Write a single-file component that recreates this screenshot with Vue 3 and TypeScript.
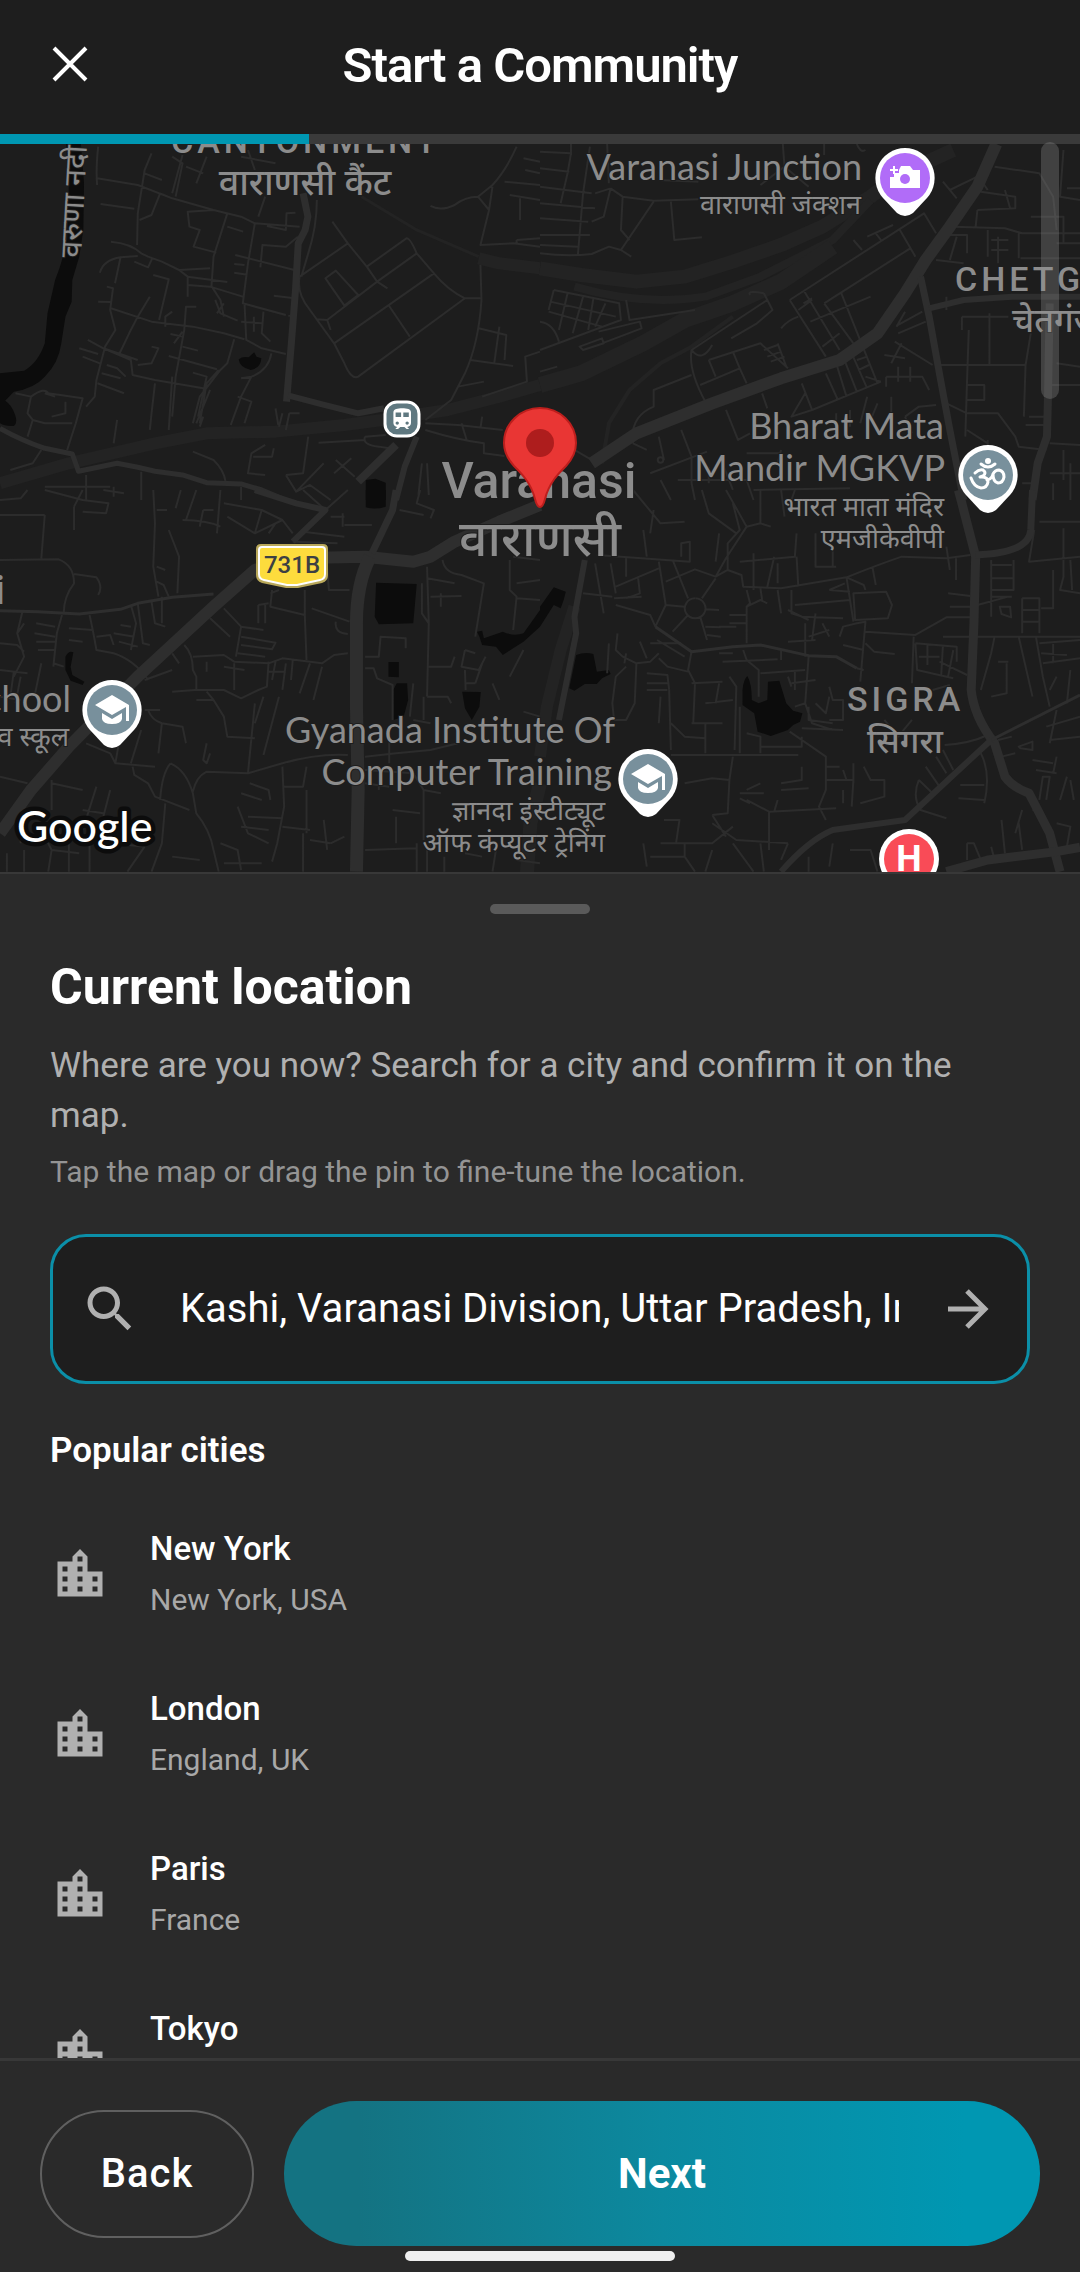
<script setup lang="ts">
import { ref } from 'vue'

interface City { name: string; region: string }
interface Road { w: number; d: string }
interface Tile { x: number; y: number; water: string; rail: Road[]; major: Road[]; minor: string }
interface Label { t: string; x: number; y: number; s: number; a: 'start' | 'middle' | 'end'; k: string }

const step = 2
const steps = 7
const query = ref('Kashi, Varanasi Division, Uttar Pradesh, India')

const cities: City[] = [
  { name: 'New York', region: 'New York, USA' },
  { name: 'London', region: 'England, UK' },
  { name: 'Paris', region: 'France' },
  { name: 'Tokyo', region: 'Japan' },
]

const labels: Label[] = [
  { t: 'CANTONMENT', x: 171, y: 153, s: 34, a: 'start', k: 'area' },
  { t: 'वाराणसी कैंट', x: 305, y: 195, s: 36, a: 'middle', k: 'hindi strong' },
  { t: 'Varanasi Junction', x: 862, y: 180, s: 36, a: 'end', k: 'poi' },
  { t: 'वाराणसी जंक्शन', x: 861, y: 214, s: 27, a: 'end', k: 'hindi' },
  { t: 'CHETGANJ', x: 955, y: 291, s: 34, a: 'start', k: 'area' },
  { t: 'चेतगंज', x: 1012, y: 332, s: 34, a: 'start', k: 'hindi strong' },
  { t: 'Varanasi', x: 539, y: 498, s: 50, a: 'middle', k: 'city' },
  { t: 'वाराणसी', x: 540, y: 556, s: 50, a: 'middle', k: 'hindi strong' },
  { t: 'Bharat Mata', x: 944, y: 439, s: 36, a: 'end', k: 'poi' },
  { t: 'Mandir MGKVP', x: 945, y: 481, s: 36, a: 'end', k: 'poi' },
  { t: 'भारत माता मंदिर', x: 944, y: 516, s: 27, a: 'end', k: 'hindi' },
  { t: 'एमजीकेवीपी', x: 944, y: 548, s: 27, a: 'end', k: 'hindi' },
  { t: 'Lahartari', x: 5, y: 604, s: 40, a: 'end', k: 'city' },
  { t: 'School', x: 71, y: 712, s: 36, a: 'end', k: 'poi' },
  { t: 'व स्कूल', x: 69, y: 746, s: 27, a: 'end', k: 'hindi' },
  { t: 'Gyanada Institute Of', x: 615, y: 743, s: 36, a: 'end', k: 'poi' },
  { t: 'Computer Training', x: 612, y: 785, s: 36, a: 'end', k: 'poi' },
  { t: 'ज्ञानदा इंस्टीट्यूट', x: 605, y: 820, s: 27, a: 'end', k: 'hindi' },
  { t: 'ऑफ कंप्यूटर ट्रेनिंग', x: 605, y: 852, s: 27, a: 'end', k: 'hindi' },
  { t: 'SIGRA', x: 847, y: 711, s: 34, a: 'start', k: 'area' },
  { t: 'सिगरा', x: 905, y: 753, s: 34, a: 'middle', k: 'hindi strong' },
]

/* Map geometry, one entry per quadrant, in tile units. */
const tiles: Tile[] = [
  {
    x: 0, y: 130,
    water: 'M192 42L200 160 195 330Q180 400 160 450L138 550 130 640Q110 700 70 722L0 730V880Q15 890 40 888Q52 880 44 855Q35 825 15 812L40 785Q100 775 130 740Q170 700 178 640L190 560 208 515 210 450 230 380 242 300 244 160 235 42ZM693 688Q705 678 722 682L738 667 745 680 759 685Q757 715 728 720 695 712 693 688ZM1062 1050L1090 1046 1120 1058V1110H1062Z',
    rail: [
      { w: 12, d: 'M0 1060L200 1000 450 940 600 910 800 905 1000 885 1110 870 1300 840 1450 800 1568 765' },
      { w: 3, d: 'M1050 200L1210 300 1390 380' },
      { w: 12, d: 'M1390 385L1450 400 1568 415' },
    ],
    major: [
      { w: 5, d: 'M0 895Q60 930 130 955L210 972 228 1024 340 1000 400 1012 450 1024 530 1035 600 1058 700 1062 760 1080 830 1110' },
      { w: 7, d: 'M880 190L894 260 886 300 866 340 858 480 846 640 832 815' },
      { w: 6, d: 'M836 796L930 822 1040 850 1115 835' },
      { w: 6, d: 'M1210 920L1175 1010 1150 1110' },
      { w: 8, d: 'M1150 945L1040 1055' },
    ],
    minor: 'M285 50Q278 120 282 165M282 145L400 165 500 205 620 240 700 260 740 280 870 290M440 70L420 120 400 250 398 345M420 130L470 150M500 80L530 100 510 200M530 75L500 190M590 130L540 110M600 80L570 160M465 190L440 255 405 270M465 190L500 205M292 222L390 236M700 80L800 100M720 60L740 120M620 240L545 245 550 290 580 300 562 350 628 368M740 280L720 400 705 520 830 555M660 250L620 380 614 470M770 200L750 260M775 288L830 300 832 250 858 248M660 290L706 305M756 412L762 345 830 350 865 320M683 375L855 420M680 402L710 405M680 428L718 434M322 335Q380 340 410 370L430 380 470 395 520 420 545 440V500M290 428Q300 390 350 382L400 378M350 382L334 460M390 395L430 412 442 385M520 420L610 415M545 440L660 456M545 465L610 470 705 500M445 435L490 448 462 570M310 470L328 475 320 540 335 600 305 650 280 750 275 800 250 830M285 515L322 516M322 535L440 575 560 590 650 610 710 628M435 500L400 560 375 610 345 675M500 545L480 560V590M570 530L540 530 535 600 510 740 500 860M625 510L640 550 690 572M650 520L630 550M615 470L640 510 650 560M710 520L715 630 760 655 830 672M765 545L760 610 785 635M700 575L760 580M737 560V605M795 497L855 505M840 555V560M255 630L300 655 400 690M230 655L285 672M240 680L290 700M300 655L380 690 385 735 450 750 590 775M680 628L660 700 640 720 580 800 560 880M490 678L630 718M440 650L460 655 440 700 400 705M495 612L530 620M505 640L530 605M530 650L575 662M310 705L340 715 365 740M295 730L350 745M283 760L360 790M450 760L440 850 435 900M560 728L600 740 575 860M610 780L570 880M635 720L600 760 580 880M788 670Q780 720 730 740L700 745M730 740L700 800 670 885M690 800L730 815 710 880M800 835L808 885M840 850L830 900M840 850L870 850M45 790L90 800 80 850 95 870 130 880 210 880M90 800Q130 770 140 790L240 805 220 880 195 960M130 790L160 800M190 815V850L150 860M95 870L80 920M340 870L330 940M500 740L490 900M590 860L580 890M820 850L810 890M870 440L1010 340 965 275M1010 340L1065 410 1180 325Q1190 322 1210 370L1260 430Q1300 480 1350 505H1395M1065 410L1095 455 1210 370M1095 455L1125 475M1095 455L950 570 920 568M870 440Q860 490 900 540L970 640 1260 430M970 640L1000 700Q1020 750 1040 740L1350 505M945 445L975 422 1040 495 1000 527ZM1128 525L1190 620M950 570L960 600M920 210Q920 290 895 370L875 440M1500 50Q1470 120 1430 165L1388 200Q1350 200 1320 225 1280 245 1250 228M1388 200L1420 240 1395 345 1490 340 1568 350M1430 170L1420 240M1395 405L1398 510Q1390 640 1350 730L1310 810 1235 870M1390 595L1470 615 1465 690M1450 590L1435 700M1365 690L1490 708M1330 770L1405 755M1568 665L1525 680 1530 755 1400 800M1465 155L1568 165M1480 195L1568 210M1520 85L1568 95M1525 120L1568 130M1510 205V270M1500 330L1568 325M1500 330V345M925 938L1060 930M1060 920L1120 915M1060 920Q1050 945 1100 950L1130 955M560 965L620 990Q650 1020 655 1055M770 945L730 970 720 1030 770 1035M795 955L790 980 735 980M895 920L880 1030 830 1035M830 1035L860 1085 940 1000M860 1085L900 1065 960 1110M975 990L1030 1040M1020 985L970 1030M1235 900Q1330 930 1405 940V970L1465 978M1340 880L1355 930M1235 880L1330 885 1460 900M1215 1095L1225 1000M1240 1000L1245 1095M1400 860L1395 895M30 1020L95 1000 120 960M130 1070H320M250 1035V1110M410 1025V1110M700 1070V1110M330 1070V1100',
  },
  {
    x: 540, y: 130,
    water: '',
    rail: [
      { w: 14, d: 'M0 415L120 435 280 455 420 440 560 395 700 345 820 290 960 200 1050 130 1200 60' },
      { w: 8, d: 'M100 470Q300 530 480 500L640 440 850 330 960 210' },
      { w: 16, d: 'M0 765L120 730 300 640 420 570 560 520 700 455 850 350' },
      { w: 4, d: 'M180 1000L200 880 260 780 350 700 440 650 560 560' },
    ],
    major: [
      { w: 12, d: 'M1325 42L1270 170 1190 290 1120 390 1060 490 980 610 870 690 700 745 500 820 280 910 150 1000' },
      { w: 7, d: 'M1105 440L1130 560 1165 760 1190 900 1230 1110' },
      { w: 6, d: 'M1130 535L1230 510 1370 500 1568 500' },
      { w: 8, d: 'M1480 520L1475 800 1472 920 1445 1000 1430 1110' },
    ],
    minor: 'M0 65L90 70 80 130 60 220M0 115L85 125M0 170L150 190M0 220L160 235M0 265L140 275M0 315L145 315M0 345L110 350M0 370Q80 380 150 372L200 350 235 360 330 215M235 360L265 380M125 190L110 375M90 42V75M145 50L125 190M195 42L200 160M205 175L160 190M205 175L240 200 330 212 460 208M205 175L185 260 150 275M240 200L235 300 260 330M380 215L390 330 470 322M345 150L460 155M705 42L710 110 640 165M710 110L780 170M825 42V75M920 42Q930 70 945 60M40 480L230 520 235 570 0 660M40 480L25 540M30 515L220 560M25 545L180 590M80 490L55 600M125 500L95 610M155 505L140 600M190 520L160 590M0 575Q40 580 55 635M250 510L260 570 450 540M170 605L290 575 295 595 180 640M115 650L180 625 185 640 125 660ZM0 725L50 710M650 490Q600 480 610 495M650 490L675 540 630 580 555 625M660 510L440 660Q470 700 500 645M440 660Q430 720 480 815M490 690L640 640 720 715M490 690L510 740M465 765L580 715 560 665M580 715L600 760M440 735L330 780V830Q260 860 270 940M650 660L690 645M660 680L700 665M670 695L710 680M690 640L715 710M725 510L1115 250 1150 310M725 510L830 680M765 480L870 660M825 520L1075 355M825 520L910 640M1045 300L1090 380M875 490L980 760M750 540L790 510M785 575L960 500M765 520L790 505M820 650L870 610M910 330L935 360M950 320L1025 285M975 310L990 330M700 595Q720 570 750 560M760 760L790 840 990 755M830 730L865 810M860 700L890 800M880 680L920 785M905 670L950 775M945 740L990 755M920 690L950 680M925 720L955 705M645 790L660 835M540 840L575 930 610 910M790 840L730 860 770 790M410 900L440 980V1060M345 920L360 990M350 990m-8 0a8 8 0 1 0 16 0a8 8 0 1 0-16 0M270 940L310 960M320 1030L485 965M100 960L150 990M1170 155L1210 205M1190 180L1270 140M1320 110L1450 130 1490 200 1500 300M1280 185L1380 200V235L1270 240M1350 180L1365 235M1280 150L1300 180M1270 240L1265 290M1200 290L1350 295 1400 310 1568 310M1175 315H1240V370M1210 320L1190 390M1300 300V380M1330 320V400M1310 330H1360M1310 360H1360M1150 390L1230 400M1395 385H1568M1390 310V385M1520 60L1510 200 1568 210M1530 175H1568M1425 260H1520V340M1500 340H1568M1180 500V540M1225 560V600M1225 560H1360M1245 600L1240 750 1235 920M1305 550V705M1150 705H1410L1425 610M1040 585L1110 545M1040 610L1120 575M1035 590L1060 545M1030 635L1140 705M1050 640L1020 700M1000 675L1060 685M1005 740H1110L1130 780M1040 710V755M1075 710V755M1005 740V770M1240 765H1290V810H1240M1180 820L1240 850H1330L1380 920 1390 950 1470 960M1410 700L1405 860M1500 700L1568 710M1480 765H1568M1480 940L1568 945M1520 960V1050M1480 1030H1568M1420 860H1470M1410 885H1470M860 850V900M900 840V890M950 800L930 880M1060 860L1100 830 1150 825M1060 860L1080 910M1020 800V900M980 820L960 870M1240 900L1300 940M1300 930V970M400 1050H600L620 1110M530 1000L560 1080M600 970H700M620 1080L900 1075M700 960L690 1000M350 1050L380 1110M440 1060L450 1110M490 1010V1060M1400 1060H1440M1490 1060V1110M1540 1000V1110',
  },
  {
    x: 0, y: 490,
    water: 'M1062 0H1120V50Q1090 60 1062 52ZM1092 278L1210 282 1200 400 1100 403 1088 380ZM1568 360L1520 430Q1490 440 1460 425L1405 445 1400 422 1385 425 1392 440 1400 465 1440 470 1460 495 1490 475 1520 455 1568 410ZM1128 516H1158V562L1128 560ZM1152 580H1182L1185 630 1172 680 1142 690V600ZM1342 605L1396 606 1392 650 1370 690 1350 655ZM190 500Q200 480 213 487L205 530 210 555 245 575 240 585 205 572 190 540Z',
    rail: [{ w: 14, d: 'M1568 880L1540 1000 1530 1150' }],
    major: [
      { w: 12, d: 'M0 1030L90 900 200 770 400 560 620 350 740 240 850 205 1060 200 1200 215 1250 200 1320 155 1450 95 1568 45' },
      { w: 6, d: 'M740 0L860 40 945 60 850 155' },
      { w: 7, d: 'M1150 0L1140 60 1080 190' },
      { w: 13, d: 'M1075 200Q1035 280 1035 400V650L1040 900 1035 1145' },
      { w: 3, d: 'M0 362L110 365 230 372 350 358 400 340 500 322 620 312' },
    ],
    minor: 'M0 30L60 25 80 0M130 0L240 30 315 40 308 70 240 65M215 50V120M130 75L0 75M130 75L120 205M240 0L215 50M0 210L170 208Q215 225 215 280 185 320 185 370M215 252L280 262Q300 290 285 315M300 0L360 10M445 0L450 100 445 230 460 320M455 60H485M525 0L510 55M490 120L520 200 515 310M455 230L480 240M455 275L475 285 490 320M530 90Q600 90 640 110M570 0L540 90M640 0L630 130M590 60L580 110M590 60H620M650 40L760 60 820 90 850 130M660 80L740 130M760 60L740 130 820 90M800 100L780 130M880 0L945 60 1010 0M850 155L980 160M880 125L1000 140M960 80H1000M995 70V110M1000 105H1080M1220 0L1210 40 1260 60 1250 85M1160 60L1230 75M950 235L955 300H1015M1240 230L1245 400 1240 620M1225 280V370L1245 400M1240 265L1320 280M1250 320L1340 318M1280 310V350M1285 210Q1290 250 1340 255L1405 280 1380 440M1480 210V300L1500 320 1490 420M1500 280L1568 270M1568 210L1490 200M1500 325L1568 330M790 300L785 350 885 375M885 300V375L890 510M785 310L810 300M750 345V400M770 345V400M750 345L780 340M905 355L1015 395M975 395Q970 430 1010 432M650 355L700 410 685 500M700 410L765 420M700 440L800 458 790 478 700 465M690 490L770 500M610 385L668 440M535 465Q560 490 560 540L570 560V600M560 500L650 495 680 515 780 520 820 505 935 520 970 495 1010 490M500 605L565 600 650 600 700 625 750 600 775 590 780 515M680 520V600M600 515V545M650 530L710 540M570 630H620L650 680 660 740 740 745M600 605L620 630M740 640L720 850M765 620L740 700M810 620L765 795M830 520L820 600M800 515L790 570M850 510L845 570M900 520L870 610M935 530L910 630M780 545H830M420 660L465 660M420 570L500 540M500 490L520 520M400 340L415 460 435 465M380 345L395 400 380 480M440 335L450 400 480 410M470 320L470 400M350 405L380 410M180 375L165 430 155 530M260 375Q270 420 280 480L330 490Q390 510 430 570M280 440L320 435 330 465M330 430L390 440M345 455L400 470M65 365L50 430 70 500 40 560M50 430L70 400M105 400L160 410M100 430L160 440M105 455H165M110 480H160M200 415L270 420M200 450L240 455M0 460L50 465 70 485M0 540L80 550M120 520L100 620M40 545L30 620M60 560L45 640M0 620L60 630M155 520L185 530M430 660Q440 690 470 700L530 710 540 760M410 720L380 820M470 700L460 790M250 760L320 790 335 820 450 830M335 820L345 760M385 830L390 855 430 880 450 920 550 960M495 820Q540 840 560 910L570 970Q610 1020 620 1080L635 1145M495 820Q470 850 465 930M560 905Q570 860 600 845L720 850 820 820Q920 790 1010 795M600 760L590 810 600 820 610 790M725 880L780 900 785 930M700 910L760 930M820 830L825 950 805 1060 790 1115M825 890H880L890 830M720 980L820 985M700 1010L780 1020M690 950L720 1030 780 1060M820 1010L900 1020M890 900V1030M900 1050L960 1060M880 1030V1145M940 990L950 1080M960 1060L1000 1040M640 1060L690 1080 700 1140M650 1120H760M480 940L470 1060 440 1145M280 890L240 1020M240 960L300 970M320 900L300 980M150 870V960M150 880L240 900M0 860L80 880M60 920V1060M130 1040L150 1080 230 1090M150 1080L140 1145M20 1090V1145M70 1080V1145M200 1000V1145M260 1060V1145M330 1060L420 1070M420 1070L370 1145M500 1100L580 1110M1060 500H1100L1105 440 1178 445V475M1060 535H1085L1095 565 1140 585V690M1200 580L1190 680M1240 620H1300L1310 640M1230 620L1230 690M1245 530H1310L1320 500M1350 480L1340 530 1390 540 1410 500M1350 480L1380 490M1350 540L1352 600M1350 580H1380M1520 480L1480 560M1400 520L1380 580M1430 580L1450 630M1520 665L1568 680M1060 800L1150 790 1250 780 1330 760M1130 750V820M1200 690L1250 700M1060 840L1200 850 1230 900V1050M1100 850V900M1060 880L1130 890M1230 900L1280 910M1140 960L1220 970M1150 980V1060M1060 1080L1210 1075M1210 1060V1145M1240 1080V1145M1290 1100V1145M1350 1090L1400 1100M1440 1080L1430 1145M1500 1110L1568 1120',
  },
  {
    x: 540, y: 490,
    water: 'M0 350L40 292 75 305Q70 330 60 355L40 345 0 410ZM105 495Q130 485 155 492L165 545 200 540 205 552 180 565 165 582 130 582 100 602 85 595ZM588 600Q590 570 602 558 615 580 615 630L635 640 660 630 662 575 695 572 715 640 735 662 762 670 755 695 735 705 720 720 670 738 632 725 622 670 588 645Z',
    rail: [{ w: 12, d: 'M100 350L60 480 20 650 0 800' }],
    major: [
      { w: 6, d: 'M130 210L100 380 105 430 80 560 55 690' },
      { w: 9, d: 'M1215 0L1265 200 1260 400 1252 600Q1260 680 1320 760L1350 860Q1370 890 1420 910L1480 1030 1510 1145' },
      { w: 7, d: 'M1265 195Q1420 190 1425 120L1430 0' },
      { w: 6, d: 'M700 1145Q780 1050 850 1020L1060 990 1190 865 1310 750' },
      { w: 9, d: 'M1180 1145L1300 1110 1500 1085 1568 1072' },
      { w: 3, d: 'M1310 750L1568 615' },
      { w: 3, d: 'M335 410L440 485 560 470 640 465 780 497 860 500 920 535' },
    ],
    minor: 'M450 325a30 30 0 1 0 1 0M430 325L385 210M470 325L510 265M420 350L365 345M480 358L520 360M430 375L385 425M465 380L485 450M365 275L450 238 510 260 545 240 585 255 590 290 700 295 890 262M510 260L540 205 600 110M345 215L365 345 335 410M220 290L345 235M160 220L185 370M205 220L220 310M220 345L320 375 335 410M215 325L295 320M250 325L290 310 285 265M125 310L210 320M165 195L435 215V155L410 160V200M250 205V260M300 120L310 200M330 60L320 130M270 0L350 100 420 95M470 0L490 70 570 130M540 0L600 110M560 40L580 120 545 160V240M520 130L510 215M600 110L640 100 670 110M640 0V100M740 0L720 60M700 0L710 80M580 215L740 200 745 130M745 200L750 290M620 190V300M680 200L660 290M690 220V280M800 130V230H860M850 230V180M890 262Q980 225 1050 200L1180 205 1250 195M1180 170L1190 240M1208 205V270M965 230L975 285M890 262L910 395M890 262L940 285 945 300M840 300L885 280M840 300L900 305M910 310L1005 305 1022 345 1010 385 915 390ZM730 300V370L760 380 880 385M740 345L900 330M720 360L780 390M600 300L610 340 600 350V460M600 350L640 330 660 340M640 295L645 330M690 300L700 370M550 375H600M550 400H600M520 410H570M480 410L525 412M485 435L525 440M800 370L790 450M820 400L840 440M870 440L880 410 920 400 945 395 930 575M945 425L1090 435 1180 382H1250M1085 440L1080 580M945 460L970 485 1030 492M920 535L940 540M880 465L940 480M1170 440H1568M1090 460L1210 470V515M1090 460L1095 540 1200 565M1125 465V525M1170 465L1165 555M1100 500H1160M1160 515L1240 555M1200 480L1185 560M1185 310L1250 318M1190 350H1250M1310 210V380M1310 225H1370M1310 265H1375V300H1310M1375 210V300M1435 120L1420 215 1568 200M1450 95H1568M1520 115V260L1510 300 1568 310M1540 210L1545 300M1270 345L1360 320M1335 350L1365 350 1368 382 1340 372ZM1400 325H1450V430M1400 325V430M1400 360H1450M1400 395H1450M1490 240V355H1455M1310 320H1370M1390 440L1430 620M1440 440L1460 560 1480 650M1320 440L1310 490 1280 600M1355 520V610L1310 620M1330 515H1360M1450 460L1568 450M1455 490L1530 495M1460 520L1568 505M1500 560L1480 600M1540 540L1530 640M1490 455V520M780 500L770 640 790 700 850 720M730 580L800 570M740 540V600M720 560L730 590M590 480L600 510M520 490H560M530 515L690 508M700 480V510M600 510L635 540V620M640 550L770 540M720 455L800 450M770 400V500M780 440L840 420M440 485L430 540 450 580 445 700M200 460L195 550M225 430L220 480 240 500 280 520 320 515 345 490M250 490L245 520M290 455L310 505M320 460H410M340 450L420 500M345 505L370 530 430 545M280 520L275 640 250 690 215 690M215 690L210 640 220 560 250 530M310 580H370M310 600H370M310 550L370 555 375 600M350 620L345 700M375 600L380 780M440 580L530 575M480 640L560 630M550 560L570 590 565 780M520 580L510 640M440 700H530M380 700L420 740 480 745M480 700V790M580 650L580 790M600 730L640 740V790M640 770H760V740M725 725L830 800V900L810 950 830 990M380 795H750M760 715L880 720M780 650V690L850 700M800 640L830 670 840 620M840 590L850 630H880V690H840M740 650L770 640M1190 585L1140 600M1000 690L1040 740 1080 690M1175 765Q1250 760 1300 735M1170 780L1200 840M1150 800L1180 850M1280 790Q1310 850 1290 940M1220 885H1290M1215 925L1290 930M1120 830L1160 890M1100 870L1140 910M1100 870Q1080 920 1105 960L1180 985M1330 750L1370 740M1340 800L1380 790M1390 770L1430 755V780L1395 775ZM1430 810L1490 820M1440 840L1500 850M1500 800L1490 850M1450 930L1460 860 1480 860 1470 930M1530 860L1510 930M1540 870L1550 930M1500 660L1480 760M1470 710L1568 680M1480 750L1568 740M1430 960L1460 965M1240 1060H1260L1280 1110M1240 1060V1110M1310 1070L1320 1110M1390 1000L1400 1080M1340 990L1350 1090M1500 1000L1540 1010 1530 1070M1400 960L1380 1030M420 880L500 865 550 870 560 800M550 870L545 970 500 975M500 1000L570 1050 720 1060M500 975L540 1040M600 930L665 965V1080M665 965L860 955M690 930L680 965M700 900L780 895M760 830V870L700 880M580 910H650M580 925L610 940M640 880L600 900M360 990H405L395 1060M350 1060H500L560 1010M300 1060L310 1130M320 1100H420L450 1145M420 1060V1100M500 1080L480 1145M560 1060L620 1145M640 1060L650 1145M720 1060L700 1110M830 870H910L905 950M880 840L890 870M910 820V880M880 900V940M830 830H870M940 830L960 870H1000V920L930 940M780 1100V1145M850 1060L840 1130M900 1080H960L980 1145M1010 1050V1145M1060 1050L1100 1070 1090 1145',
  },
]
</script>

<template>
  <main class="screen">
    <header class="bar">
      <button class="close" type="button" aria-label="Close">
        <svg viewBox="0 0 60 60"><path d="M14 14L46 46M46 14L14 46" /></svg>
      </button>
      <h1>Start a Community</h1>
    </header>
    <div class="track" role="progressbar" :aria-valuenow="step" :aria-valuemax="steps">
      <div class="fill" :style="{ width: (step / steps) * 100 + '%' }"></div>
    </div>

    <section class="map" aria-label="Map">
      <svg viewBox="0 144 1080 728" preserveAspectRatio="xMidYMid slice">
        <g v-for="(t, i) in tiles" :key="i" :transform="`translate(${t.x} ${t.y}) scale(.3444 .3333)`" class="roads">
          <path class="water" :d="t.water" />
          <path v-for="(r, j) in t.rail" :key="'r' + j" class="rail" :stroke-width="r.w" :d="r.d" />
          <path class="minor" :d="t.minor" />
          <path v-for="(r, j) in t.major" :key="'m' + j" class="major" :stroke-width="r.w" :d="r.d" />
        </g>

        <text v-for="l in labels" :key="l.t" :x="l.x" :y="l.y" :font-size="l.s" :text-anchor="l.a" :class="['label', l.k]">{{ l.t }}</text>
        <text class="label hindi" font-size="30" transform="translate(81 258) rotate(-87)">वरुणा नदी</text>

        <g transform="translate(402 419)">
          <rect x="-17" y="-17" width="34" height="34" rx="12" fill="#5f7880" stroke="#fff" stroke-width="3" />
          <path transform="translate(-13 -13) scale(1.1)" fill="#fff" d="M12 2c-4 0-8 .5-8 4v9.5C4 17.43 5.57 19 7.5 19L6 20.5v.5h2.23l2-2H14l2 2h2v-.5L16.5 19c1.93 0 3.5-1.57 3.5-3.5V6c0-3.5-3.58-4-8-4zM7.500 17c-.83 0-1.500-.67-1.500-1.500S6.670 14 7.500 14s1.500.67 1.500 1.500S8.330 17 7.500 17zm3.500-7H6V6h5v4zm2 0V6h5v4h-5zm3.500 7c-.83 0-1.500-.67-1.500-1.500s.67-1.500 1.500-1.500 1.500.67 1.500 1.500-.67 1.500-1.500 1.500z" />
        </g>

        <g transform="translate(292 566)">
          <path d="M-31-22H31Q36-22 36-17V9Q36 15 30 17L6 22H-6L-30 17Q-36 15-36 9V-17Q-36-22-31-22Z" fill="#b9a85a" />
          <path d="M-30-19H30Q33-19 33-16V8Q33 13 28 14L5 19H-5L-28 14Q-33 13-33 8V-16Q-33-19-30-19Z" fill="#fddc3d" stroke="#fff" stroke-width="2" />
          <text class="shield" y="7" text-anchor="middle">731B</text>
        </g>

        <g transform="translate(905 178)">
          <path class="pin" d="M0-30A30 30 0 0 1 22 20L8 35Q0 41-8 35L-22 20A30 30 0 0 1 0-30Z" />
          <circle r="25" fill="#b16cf8" />
          <path fill="#fff" d="M-15-1H-11V-5H-6V-8L-4-12H5L8-8H15V10H-15ZM-12-12H-10V-9H-7V-7H-10V-4H-12V-7H-15V-9H-12Z" />
          <circle r="5" cy="1" fill="#b16cf8" />
        </g>

        <g transform="translate(988 475)">
          <path class="pin" d="M0-30A30 30 0 0 1 22 20L8 35Q0 41-8 35L-22 20A30 30 0 0 1 0-30Z" />
          <circle r="25" fill="#78909c" />
          <circle cy="-14" r="3" fill="#fff" />
          <path class="om" d="M-7-11Q0-5 7-11M-13-2Q-9-6-5-5Q-1-2-5 1L-8 2M-6 2Q0 2 0 7Q-1 13-7 13Q-14 12-17 3M-1 5Q4 4 5-1Q7-5 11-5Q16-4 16 2Q15 8 10 8Q5 7 5-1" />
        </g>

        <g v-for="p in [[112, 710], [648, 779]]" :key="p[0]" :transform="`translate(${p[0]} ${p[1]})`">
          <path class="pin" d="M0-30A30 30 0 0 1 22 20L8 35Q0 41-8 35L-22 20A30 30 0 0 1 0-30Z" />
          <circle r="25" fill="#78909c" />
          <path fill="#fff" d="M0-15L17-5V11H14V-3L0 5-17-5ZM-10 3L0 9 10 3V9Q9 14 0 14T-10 9Z" />
        </g>

        <g transform="translate(909 859)">
          <circle class="pin" r="30" />
          <circle r="25" fill="#f94b57" />
          <text class="hospital" y="12" text-anchor="middle">H</text>
        </g>

        <path d="M540 507Q537 507 535 499C531 483 522 474 514 466Q504 455 504 443A36 35 0 0 1 576 443Q576 455 566 466C558 474 549 483 545 499Q543 507 540 507Z" fill="#e93634" stroke="#bd1f1d" stroke-width="2" />
        <circle cx="540" cy="443" r="14" fill="#ae1d1d" />

        <text class="google" x="17" y="842">Google</text>
      </svg>
      <div class="thumb"></div>
    </section>

    <section class="sheet">
      <div class="handle"></div>
      <h2>Current location</h2>
      <p class="lead">Where are you now? Search for a city and confirm it on the map.</p>
      <p class="hint">Tap the map or drag the pin to fine-tune the location.</p>

      <form class="search" @submit.prevent>
        <svg class="icon" viewBox="0 0 24 24" aria-hidden="true"><path d="M15.500 14h-.79l-.28-.27C15.410 12.590 16 11.110 16 9.500 16 5.910 13.090 3 9.500 3S3 5.910 3 9.500 5.910 16 9.500 16c1.610 0 3.090-.59 4.230-1.570l.27.28v.79l5 4.990L20.490 19l-4.990-5zm-6 0C7.010 14 5 11.990 5 9.500S7.010 5 9.500 5 14 7.010 14 9.500 11.990 14 9.500 14z" /></svg>
        <input v-model="query" type="text" aria-label="Search for a city" />
        <button type="submit" aria-label="Search">
          <svg viewBox="0 0 60 60"><path d="M11 30H47M30 12L48 30 30 48" /></svg>
        </button>
      </form>

      <h3>Popular cities</h3>
      <ul>
        <li v-for="c in cities" :key="c.name">
          <button type="button" class="city-row">
            <svg class="icon" viewBox="0 0 24 24" aria-hidden="true"><path d="M15 11V5l-3-3-3 3v2H3v14h18V11h-6zm-8 8H5v-2h2v2zm0-4H5v-2h2v2zm0-4H5V9h2v2zm6 8h-2v-2h2v2zm0-4h-2v-2h2v2zm0-4h-2V9h2v2zm0-4h-2V5h2v2zm6 12h-2v-2h2v2zm0-4h-2v-2h2v2z" /></svg>
            <span class="names">
              <span class="name">{{ c.name }}</span>
              <span class="region">{{ c.region }}</span>
            </span>
          </button>
        </li>
      </ul>
    </section>

    <footer class="actions">
      <button type="button" class="back">Back</button>
      <button type="button" class="next">Next</button>
      <div class="home"></div>
    </footer>
  </main>
</template>

<style>
body {
  background: #1e1e1e;
}
</style>

<style scoped>
.screen {
  display: flex;
  flex-direction: column;
  height: 100vh;
  overflow: hidden;
  background: #1e1e1e;
  color: #fff;
  font-family: Roboto, "Noto Sans", sans-serif;
}
h1, h2, h3, p, ul {
  margin: 0;
  padding: 0;
  list-style: none;
}
button {
  padding: 0;
  border: 0;
  background: none;
  color: inherit;
  font: inherit;
}
svg {
  display: block;
}
.bar {
  display: grid;
  grid-template-columns: 60px 1fr 60px;
  align-items: start;
  padding: 34px 40px 36px;
}
.bar h1 {
  font-size: 49px;
  line-height: 64px;
  font-weight: 600;
  letter-spacing: -1px;
  text-align: center;
}
.close svg {
  width: 60px;
  height: 60px;
  fill: none;
  stroke: #fff;
  stroke-width: 4;
}
.track {
  flex: none;
  height: 10px;
  background: #3a3a3a;
}
.fill {
  height: 100%;
  background: #0097b2;
}
.map {
  position: relative;
  flex: none;
  aspect-ratio: 1080 / 728;
  background: #1d1d1d;
}
.map > svg {
  width: 100%;
  height: 100%;
}
.roads path {
  fill: none;
  stroke-linejoin: round;
  vector-effect: non-scaling-stroke;
}
.roads .water {
  fill: #0c0c0c;
}
.roads .rail {
  stroke: #232323;
}
.roads .minor {
  stroke: #2c2c2c;
  stroke-width: 2px;
}
.roads .major {
  stroke: #2e2e2e;
}
.label {
  fill: #8c8c8c;
  stroke: #1d1d1d;
  stroke-width: 2px;
  paint-order: stroke;
}
.poi {
  font-family: Lato, sans-serif;
}
.area {
  font-weight: 500;
  letter-spacing: 4px;
}
.city {
  font-weight: 500;
}
.hindi {
  font-family: "Noto Sans Devanagari", "Noto Sans", sans-serif;
}
.strong {
  font-weight: 500;
}
.shield {
  font-size: 24px;
  font-weight: 500;
  fill: #3c4043;
}
.pin {
  fill: #fff;
}
.om {
  fill: none;
  stroke: #fff;
  stroke-width: 3px;
  stroke-linecap: round;
}
.hospital {
  font-size: 36px;
  font-weight: 700;
  fill: #fff;
}
.google {
  font-family: Lato, sans-serif;
  font-size: 43px;
  font-weight: 500;
  fill: #fff;
  stroke: #0c0c0c;
  stroke-width: 9px;
  stroke-linejoin: round;
  paint-order: stroke;
}
.thumb {
  position: absolute;
  top: -2px;
  right: 21px;
  width: 18px;
  height: 257px;
  border-radius: 9px;
  background: rgba(150, 150, 150, 0.3);
}
.sheet {
  flex: 1 1 0;
  min-height: 0;
  overflow: hidden;
  padding: 0 50px;
  border-top: 2px solid #383838;
  background: #2a2a2a;
}
.handle {
  width: 100px;
  height: 10px;
  margin: 30px auto 43px;
  border-radius: 5px;
  background: #5a5a5a;
}
h2 {
  font-size: 50px;
  line-height: 60px;
  font-weight: 700;
}
.lead {
  margin-top: 24px;
  font-size: 35px;
  line-height: 50px;
  color: #b0b0b0;
}
.hint {
  margin-top: 11px;
  font-size: 30px;
  line-height: 40px;
  color: #949494;
}
.search {
  display: flex;
  align-items: center;
  box-sizing: border-box;
  height: 150px;
  margin: 42px 0 47px;
  padding: 0 30px 0 27px;
  border: 3px solid #0b8fa8;
  border-radius: 36px;
  background: #1e1e1e;
}
.icon {
  flex: none;
  width: 60px;
  height: 60px;
  fill: #b0b0b0;
}
.search input {
  flex: 1;
  min-width: 0;
  margin: 0 38px 0 40px;
  padding: 0;
  border: 0;
  outline: 0;
  background: none;
  color: #fff;
  font: 400 40px/50px Roboto, sans-serif;
}
.search button svg {
  width: 60px;
  height: 60px;
  fill: none;
  stroke: #b0b0b0;
  stroke-width: 5;
}
h3 {
  margin-bottom: 23px;
  font-size: 35px;
  line-height: 40px;
  font-weight: 600;
}
.city-row {
  display: flex;
  align-items: center;
  gap: 40px;
  width: 100%;
  height: 160px;
  text-align: left;
}
.names {
  display: flex;
  flex-direction: column;
}
.name {
  font-size: 33px;
  line-height: 52px;
  font-weight: 500;
}
.region {
  font-size: 30px;
  line-height: 50px;
  color: #a8a8a8;
}
.actions {
  position: relative;
  display: flex;
  align-items: center;
  gap: 30px;
  padding: 40px 40px 26px;
  border-top: 3px solid #383838;
  background: #2a2a2a;
}
.back {
  box-sizing: border-box;
  width: 214px;
  height: 128px;
  border: 2px solid #606060;
  border-radius: 64px;
  font-size: 40px;
  font-weight: 500;
  letter-spacing: 1px;
}
.next {
  flex: 1;
  height: 145px;
  border-radius: 73px;
  background: linear-gradient(90deg, #147382 0%, #147382 10%, #0c899f 50%, #0097b2 90%);
  font-size: 42px;
  font-weight: 700;
}
.home {
  position: absolute;
  bottom: 11px;
  left: 50%;
  width: 270px;
  height: 10px;
  margin-left: -135px;
  border-radius: 5px;
  background: #efefef;
}
</style>
